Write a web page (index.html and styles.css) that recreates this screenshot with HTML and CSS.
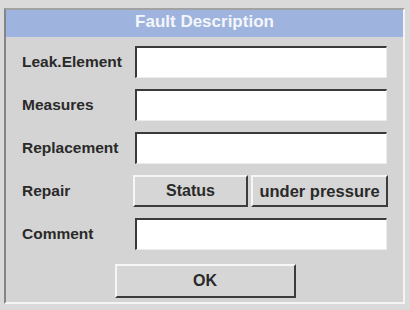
FILE: index.html
```html
<!DOCTYPE html>
<html>
<head>
<meta charset="utf-8">
<link rel="stylesheet" href="styles.css">
</head>
<body>
<div class="frame">
  <div class="title">Fault Description</div>
  <div class="content">
    <div class="form">
      <div class="label">Leak.Element</div>
      <div class="field"></div>
      <div class="label">Measures</div>
      <div class="field"></div>
      <div class="label">Replacement</div>
      <div class="field"></div>
      <div class="label">Repair</div>
      <div class="btns">
        <div class="btn status">Status</div>
        <div class="btn pressure">under pressure</div>
      </div>
      <div class="label">Comment</div>
      <div class="field"></div>
    </div>
    <div class="okrow">
      <div class="btn ok">OK</div>
    </div>
  </div>
</div>
</body>
</html>
```
FILE: styles.css
```css
* { box-sizing: border-box; }
html, body {
  margin: 0;
  padding: 0;
  background: #dadada;
  font-family: "Liberation Sans", Arial, sans-serif;
}
.frame {
  margin: 8px 0 0 4px;
  width: 401px;
  height: 296px;
  background: #d4d4d4;
  border-top: 2px solid #a2a2a2;
  border-left: 2px solid #858585;
  border-right: 2px solid #f4f4f4;
  border-bottom: 2px solid #f4f4f4;
}
.title {
  height: 27px;
  line-height: 23px;
  background: #9eb3dd;
  color: #f4f6fb;
  font-weight: bold;
  font-size: 17px;
  text-align: center;
}
.content {
  padding: 9px 16px 0 16px;
}
.form {
  display: grid;
  grid-template-columns: 112px 1fr;
  grid-auto-rows: 32px;
  row-gap: 11px;
  align-items: center;
}
.label {
  font-weight: bold;
  font-size: 15.5px;
  color: #2a2a2a;
}
.field {
  height: 32px;
  margin-left: 1px;
  background: #ffffff;
  border-top: 2px solid #3a3a3a;
  border-left: 2px solid #3a3a3a;
  border-right: 1px solid #ececec;
  border-bottom: 1px solid #ececec;
}
.btns {
  display: flex;
  gap: 3px;
  height: 32px;
  margin-left: -1px;
  margin-right: -1px;
}
.btn {
  display: flex;
  align-items: center;
  justify-content: center;
  background: #d6d6d6;
  border-top: 2px solid #f6f6f6;
  border-left: 2px solid #f6f6f6;
  border-right: 2px solid #3c3c3c;
  border-bottom: 2px solid #3c3c3c;
  font-weight: bold;
  font-size: 16px;
  color: #2a2a2a;
}
.status { width: 115px; }
.pressure { flex: 1; font-size: 16.5px; }
.okrow {
  display: flex;
  justify-content: center;
  margin-top: 14px;
}
.ok {
  width: 181px;
  height: 34px;
  margin-left: 1px;
}
```
